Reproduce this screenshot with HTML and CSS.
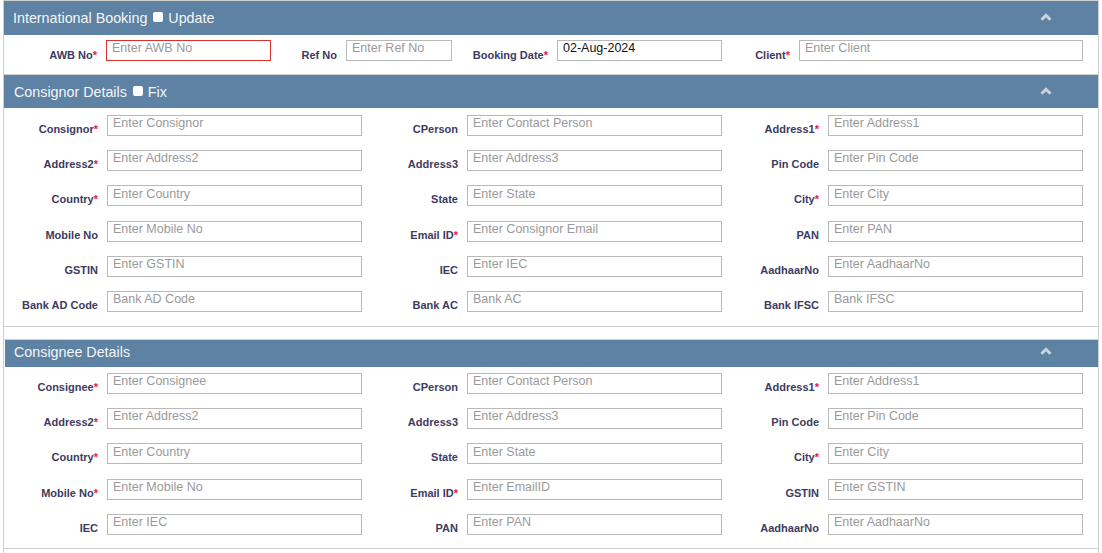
FILE: index.html
```html
<!DOCTYPE html>
<html lang="en">
<head>
<meta charset="utf-8">
<title>International Booking</title>
<link rel="stylesheet" href="styles.css">
</head>
<body>
<div class="wrap">
  <section class="panel panel-booking">
    <header class="panel-head head-lg">
      <span class="title">International Booking</span>
      <input type="checkbox" class="hchk" aria-label="Update">
      <span class="title">Update</span>
      <svg class="chev" width="12" height="8" viewBox="0 0 12 8"><polyline points="1.5,6.8 6,2.3 10.5,6.8" fill="none" stroke="currentColor" stroke-width="3"/></svg>
    </header>
    <div class="panel-body body-booking">
      <div class="grid grid-booking">
        <label class="lbl lbl-top">AWB No<span class="req">*</span></label>
        <input class="fld fld-err" placeholder="Enter AWB No">
        <label class="lbl lbl-top">Ref No</label>
        <input class="fld" placeholder="Enter Ref No">
        <label class="lbl lbl-top">Booking Date<span class="req">*</span></label>
        <input class="fld" value="02-Aug-2024">
        <label class="lbl lbl-top">Client<span class="req">*</span></label>
        <input class="fld" placeholder="Enter Client">
      </div>
    </div>
  </section>

  <section class="panel panel-consignor">
    <header class="panel-head head-md">
      <span class="title">Consignor Details</span>
      <input type="checkbox" class="hchk" aria-label="Fix">
      <span class="title">Fix</span>
      <svg class="chev" width="12" height="8" viewBox="0 0 12 8"><polyline points="1.5,6.8 6,2.3 10.5,6.8" fill="none" stroke="currentColor" stroke-width="3"/></svg>
    </header>
    <div class="panel-body body-consignor">
      <div class="grid grid-three">
        <label class="lbl">Consignor<span class="req">*</span></label><input class="fld" placeholder="Enter Consignor">
        <label class="lbl">CPerson</label><input class="fld" placeholder="Enter Contact Person">
        <label class="lbl">Address1<span class="req">*</span></label><input class="fld" placeholder="Enter Address1">

        <label class="lbl">Address2<span class="req">*</span></label><input class="fld" placeholder="Enter Address2">
        <label class="lbl">Address3</label><input class="fld" placeholder="Enter Address3">
        <label class="lbl">Pin Code</label><input class="fld" placeholder="Enter Pin Code">

        <label class="lbl">Country<span class="req">*</span></label><input class="fld" placeholder="Enter Country">
        <label class="lbl">State</label><input class="fld" placeholder="Enter State">
        <label class="lbl">City<span class="req">*</span></label><input class="fld" placeholder="Enter City">

        <label class="lbl">Mobile No</label><input class="fld" placeholder="Enter Mobile No">
        <label class="lbl">Email ID<span class="req">*</span></label><input class="fld" placeholder="Enter Consignor Email">
        <label class="lbl">PAN</label><input class="fld" placeholder="Enter PAN">

        <label class="lbl">GSTIN</label><input class="fld" placeholder="Enter GSTIN">
        <label class="lbl">IEC</label><input class="fld" placeholder="Enter IEC">
        <label class="lbl">AadhaarNo</label><input class="fld" placeholder="Enter AadhaarNo">

        <label class="lbl">Bank AD Code</label><input class="fld" placeholder="Bank AD Code">
        <label class="lbl">Bank AC</label><input class="fld" placeholder="Bank AC">
        <label class="lbl">Bank IFSC</label><input class="fld" placeholder="Bank IFSC">
      </div>
    </div>
  </section>

  <div class="spacer"></div>

  <section class="panel panel-consignee">
    <header class="panel-head head-sm">
      <span class="title">Consignee Details</span>
      <svg class="chev" width="12" height="8" viewBox="0 0 12 8"><polyline points="1.5,6.8 6,2.3 10.5,6.8" fill="none" stroke="currentColor" stroke-width="3"/></svg>
    </header>
    <div class="panel-body body-consignee">
      <div class="grid grid-three">
        <label class="lbl">Consignee<span class="req">*</span></label><input class="fld" placeholder="Enter Consignee">
        <label class="lbl">CPerson</label><input class="fld" placeholder="Enter Contact Person">
        <label class="lbl">Address1<span class="req">*</span></label><input class="fld" placeholder="Enter Address1">

        <label class="lbl">Address2<span class="req">*</span></label><input class="fld" placeholder="Enter Address2">
        <label class="lbl">Address3</label><input class="fld" placeholder="Enter Address3">
        <label class="lbl">Pin Code</label><input class="fld" placeholder="Enter Pin Code">

        <label class="lbl">Country<span class="req">*</span></label><input class="fld" placeholder="Enter Country">
        <label class="lbl">State</label><input class="fld" placeholder="Enter State">
        <label class="lbl">City<span class="req">*</span></label><input class="fld" placeholder="Enter City">

        <label class="lbl">Mobile No<span class="req">*</span></label><input class="fld" placeholder="Enter Mobile No">
        <label class="lbl">Email ID<span class="req">*</span></label><input class="fld" placeholder="Enter EmailID">
        <label class="lbl">GSTIN</label><input class="fld" placeholder="Enter GSTIN">

        <label class="lbl">IEC</label><input class="fld" placeholder="Enter IEC">
        <label class="lbl">PAN</label><input class="fld" placeholder="Enter PAN">
        <label class="lbl">AadhaarNo</label><input class="fld" placeholder="Enter AadhaarNo">
      </div>
    </div>
  </section>
</div>
</body>
</html>
```

FILE: styles.css
```css
* { box-sizing: border-box; }

html, body {
  margin: 0;
  padding: 0;
  background: #ffffff;
}

body {
  font-family: "Liberation Sans", Arial, sans-serif;
  color: #333;
}

.wrap {
  margin-left: 3px;
  width: 1096px;
  height: 553px;
  border-top: 1px solid #cfcfcf;
  border-left: 1px solid #cfcfcf;
  border-right: 1px solid #cfcfcf;
}

.panel-head {
  display: flex;
  align-items: center;
  background: #5d82a4;
  color: #f4f6f8;
  padding-left: 9px;
  padding-right: 46px;
}

.head-lg { height: 34px; }
.head-md { height: 33px; padding-left: 10px; }
.head-sm { height: 27px; padding-left: 9px; padding-bottom: 2px; margin-left: 1px; }

.title {
  font-size: 14.3px;
  line-height: 16px;
  white-space: nowrap;
}

.hchk {
  appearance: none;
  -webkit-appearance: none;
  width: 10px;
  height: 10px;
  margin: 0 5px 0 6px;
  background: #ffffff;
  border: none;
  border-radius: 2px;
  position: relative;
  top: -1px;
}

.chev {
  margin-left: auto;
  color: #cdd3da;
  position: relative;
  top: -1px;
}

.panel-body {
  border-bottom: 1px solid #cfcfcf;
}

.body-booking { padding: 5px 0 13px 0; }
.body-consignor { padding: 7px 0 14px 0; }
.body-consignee { padding: 6px 0 13px 0; border-top: none; }

.spacer { height: 12px; }

.panel-consignee { border-top: 1px solid #cfcfcf; }

.grid {
  display: grid;
  grid-auto-rows: 21px;
  row-gap: 14.2px;
}

.grid-booking {
  grid-template-columns: 102px 165px 75px 106px 105px 165px 77px 284px;
}

.grid-three {
  grid-template-columns: 103px 255px 105px 255px 106px 255px;
}

.lbl {
  font-size: 11px;
  font-weight: bold;
  line-height: 14px;
  color: #3d3b60;
  text-align: right;
  padding: 7px 9px 0 0;
  white-space: nowrap;
}

.lbl-top { padding-top: 8px; }

.req { color: #e3203f; }

.fld {
  display: block;
  width: 100%;
  height: 21px;
  margin: 0;
  padding: 0 5px 4.5px 5px;
  font-family: "Liberation Sans", Arial, sans-serif;
  font-size: 12.5px;
  color: #111;
  background: #fff;
  border: 1px solid #b9b9b9;
  border-radius: 0;
  outline: none;
}

.fld::placeholder { color: #9a9a9a; opacity: 1; }

.fld-err { border-color: #d9312f; }
```
